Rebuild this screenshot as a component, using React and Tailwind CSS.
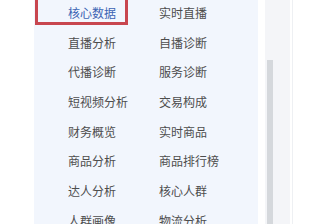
// Menu grid panel with a highlighted item and a scrollbar strip

const ROWS = [
  ["核心数据", "实时直播"],
  ["直播分析", "自播诊断"],
  ["代播诊断", "服务诊断"],
  ["短视频分析", "交易构成"],
  ["财务概览", "实时商品"],
  ["商品分析", "商品排行榜"],
  ["达人分析", "核心人群"],
  ["人群画像", "物流分析"],
];

const FONT = { fontFamily: '"Noto Sans CJK SC", "Noto Sans", sans-serif' };

export default function App() {
  return (
    <div className="relative flex h-[224px] w-[312px] overflow-hidden bg-white" style={FONT}>
      {/* left gutter */}
      <div className="w-[34px] shrink-0 bg-white" />

      {/* menu panel */}
      <div className="relative w-[224px] shrink-0 bg-[#f2f6fd]">
        <div className="-mt-[2px] grid grid-cols-[91px_91px] pl-[34px]">
          {ROWS.map((row, i) =>
            row.map((label, j) => (
              <div
                key={`${i}-${j}`}
                className={`flex h-[29.7px] items-center text-[12px] leading-none ${
                  i === 0 && j === 0 ? "text-[#3d64b4]" : "text-[#4d4d4d]"
                }`}
              >
                {label}
              </div>
            ))
          )}
        </div>

        {/* red highlight annotation */}
        <div className="absolute left-[1px] top-[-6px] h-[31px] w-[93px] border-[3px] border-[#c8464f]" />
      </div>

      {/* gap */}
      <div className="w-[7px] shrink-0 bg-white" />

      {/* scrollbar track */}
      <div className="flex w-[25px] shrink-0 flex-col bg-[#f4f5f8] pl-[2px]">
        <div className="h-[60px]" />
        <div className="w-[6px] flex-1 bg-[#d5d8dc]" />
      </div>

      {/* right edge */}
      <div className="w-[2px] shrink-0 bg-white" />
      <div className="w-px shrink-0 bg-[#eef0f3]" />
      <div className="flex-1 bg-white" />
    </div>
  );
}
